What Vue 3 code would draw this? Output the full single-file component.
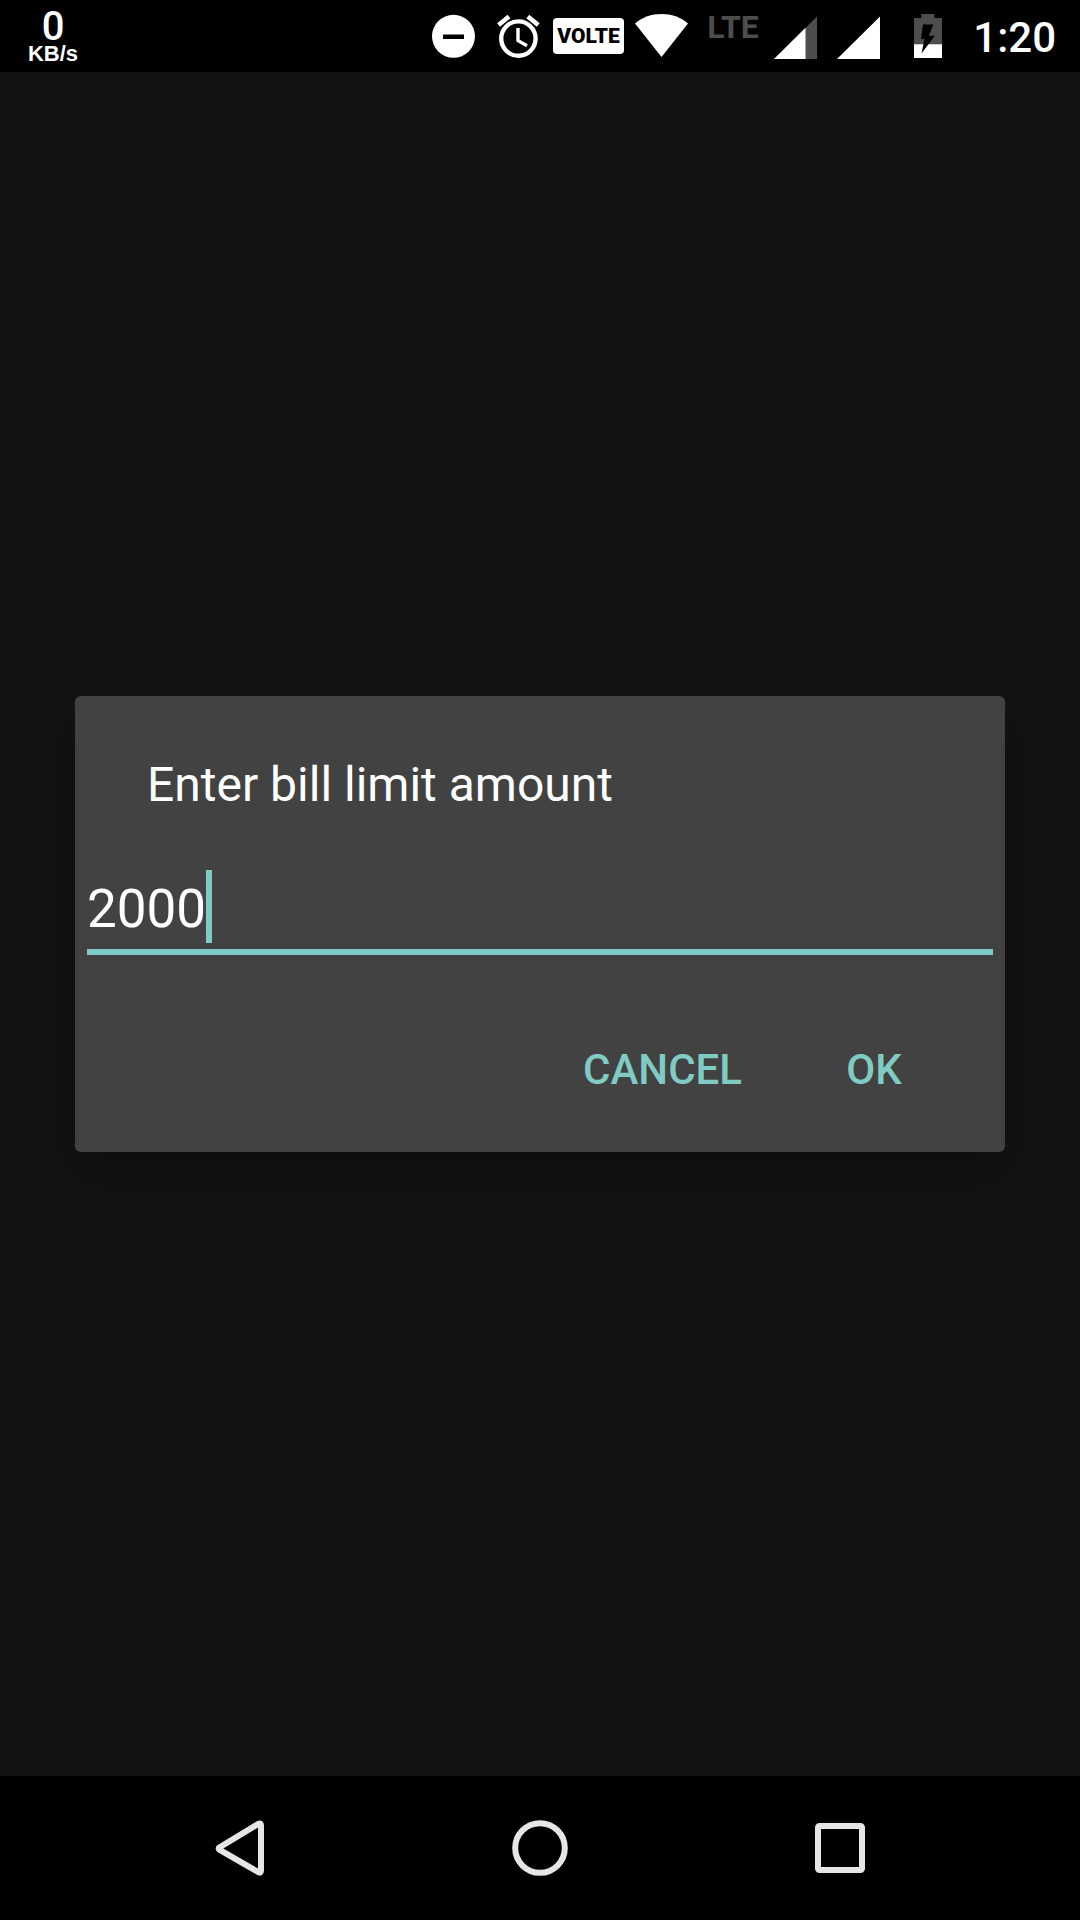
<script setup>
import { ref } from 'vue'

const amount = ref('2000')
</script>

<template>
  <div class="screen">
    <header class="status">
      <div class="speed">
        <span class="speed-value">0</span>
        <span class="speed-unit">KB/s</span>
      </div>
      <div class="indicators">
        <svg class="icon" viewBox="424 0 64 72" aria-label="Do not disturb">
          <circle cx="453.5" cy="36.3" r="21.5" fill="#fff" />
          <path d="M443 34.5h21V39h-21z" fill="#000" />
        </svg>
        <svg class="icon" viewBox="488 0 64 72" aria-label="Alarm" fill="none" stroke="#fff">
          <circle cx="518.4" cy="38.6" r="17.2" stroke-width="4.4" />
          <path d="M518 28v12.6l9 5.2" stroke-width="3.4" />
          <path d="M498.600 25l10.400-8.600M538.200 25l-10.400-8.600" stroke-width="4.6" />
        </svg>
        <span class="volte">VOLTE</span>
        <svg class="icon wide" viewBox="632 0 72 72" aria-label="Wi-Fi">
          <path d="M635 23.5C642.500 17 651.500 14 661.500 14S680.500 17 688 23.500L661.500 57z" fill="#fff" />
        </svg>
        <span class="lte">LTE</span>
        <svg class="icon" viewBox="768 0 64 72" aria-label="Signal, first card">
          <path d="M774 59L817 16.500V59z" fill="#4d4d4d" />
          <path d="M774 59L805.500 27.800V59z" fill="#fff" />
        </svg>
        <svg class="icon" viewBox="832 0 64 72" aria-label="Signal, second card">
          <path d="M837 59L880 16.500V59z" fill="#fff" />
        </svg>
        <svg class="icon" viewBox="896 0 64 72" aria-label="Battery charging">
          <path d="M914 18h7.300v-4h13.200v4h7.500v27h-28z" fill="#4d4d4d" />
          <path d="M914 44.300h28V58h-28z" fill="#fff" />
          <path d="M923 24.500h10.400l-4.600 11.200h6L921.500 53.500l3-14.500h-3.500z" fill="#000" />
        </svg>
        <time class="clock">1:20</time>
      </div>
    </header>

    <main class="stage">
      <form class="dialog" role="dialog" aria-labelledby="limit-label" @submit.prevent>
        <label id="limit-label" class="title" for="limit">Enter bill limit amount</label>
        <div class="field">
          <input id="limit" v-model="amount" class="amount" type="text" inputmode="numeric" />
          <span class="caret" :style="{ left: amount.length * 30 - 1 + 'px' }"></span>
        </div>
        <div class="actions">
          <button type="button" class="action">CANCEL</button>
          <button type="submit" class="action">OK</button>
        </div>
      </form>
    </main>

    <nav class="navbar">
      <button type="button" class="nav-button" aria-label="Back">
        <svg class="nav-icon" viewBox="0 0 72 72">
          <path d="M15.700 35.200L54.700 11.700q2.300-1 2.300 1.800V58.500q0 2.800-2.300 1.800L15.700 37.800q-2.200-1.300 0-2.600z" />
        </svg>
      </button>
      <button type="button" class="nav-button" aria-label="Home">
        <svg class="nav-icon" viewBox="0 0 72 72"><circle cx="36" cy="36" r="24.800" /></svg>
      </button>
      <button type="button" class="nav-button" aria-label="Recent apps">
        <svg class="nav-icon" viewBox="0 0 72 72"><rect x="14" y="14" width="44" height="44" rx="1.500" /></svg>
      </button>
    </nav>
  </div>
</template>

<style>
body {
  margin: 0;
  background: #131313;
}
</style>

<style scoped>
.screen {
  display: flex;
  flex-direction: column;
  min-height: 100vh;
  background: #131313;
  color: #fff;
  font-family: Roboto, sans-serif;
}

.status {
  display: flex;
  justify-content: space-between;
  height: 72px;
  padding: 0 24px;
  background: #000;
}

.speed {
  display: flex;
  flex-direction: column;
  align-items: center;
  width: 58px;
  padding-top: 8px;
}

.speed-value {
  font-size: 40px;
  font-weight: 500;
  line-height: 38px;
}

.speed-unit {
  font: bold 22px/16px "Liberation Sans", sans-serif;
}

.indicators {
  display: flex;
  align-items: center;
}

.icon {
  display: block;
  width: 64px;
  height: 72px;
}

.icon.wide {
  width: 72px;
}

.volte {
  width: 71px;
  margin: 0 8px 0 1px;
  border-radius: 4px;
  background: #fff;
  color: #000;
  font-size: 21px;
  font-weight: 900;
  line-height: 36px;
  text-align: center;
}

.lte {
  box-sizing: border-box;
  width: 64px;
  align-self: flex-start;
  padding: 8px 6px 0 0;
  color: #4d4d4d;
  font-size: 32px;
  font-weight: 700;
  line-height: 38px;
  text-align: center;
}

.clock {
  width: 96px;
  padding-top: 4px;
  font-size: 42px;
  font-weight: 500;
  line-height: 50px;
  text-align: right;
}

.stage {
  display: flex;
  flex: 1;
  flex-direction: column;
  justify-content: center;
  padding: 0 75px;
}

.dialog {
  display: flex;
  flex-direction: column;
  padding-top: 61px;
  border-radius: 6px;
  background: #424242;
  box-shadow: 0 20px 48px rgba(0, 0, 0, 0.25);
}

.title {
  padding: 0 72px;
  font-size: 48px;
  line-height: 56px;
}

.field {
  position: relative;
  margin: 57px 12px 0;
  border-bottom: 6px solid #80cbc4;
}

.amount {
  display: block;
  box-sizing: border-box;
  width: 100%;
  height: 79px;
  padding: 7px 0 8px;
  border: 0;
  outline: 0;
  background: transparent;
  color: #fff;
  font: 53px/64px Roboto, sans-serif;
}

.caret {
  position: absolute;
  top: 0;
  width: 6px;
  height: 73px;
  background: #80cbc4;
}

.actions {
  display: flex;
  justify-content: flex-end;
  gap: 12px;
  padding: 61px 35px 28px;
}

.action {
  min-width: 192px;
  height: 108px;
  padding: 0 24px;
  border: 0;
  background: transparent;
  color: #80cbc4;
  font: 500 42px/50px Roboto, sans-serif;
}

.navbar {
  display: flex;
  justify-content: space-around;
  height: 144px;
  padding: 0 90px;
  background: #000;
}

.nav-button {
  display: flex;
  flex: 1;
  align-items: center;
  justify-content: center;
  padding: 0;
  border: 0;
  background: transparent;
}

.nav-icon {
  width: 72px;
  height: 72px;
  fill: none;
  stroke: #e6e6e6;
  stroke-width: 6;
}
</style>
